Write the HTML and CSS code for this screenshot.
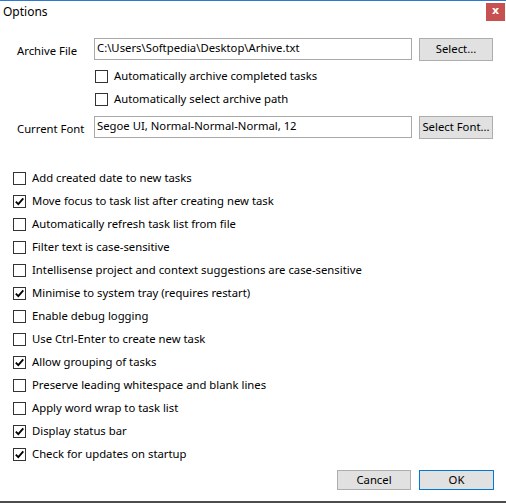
FILE: index.html
```html
<!DOCTYPE html>
<html>
<head>
<meta charset="utf-8">
<link rel="stylesheet" href="styles.css">
</head>
<body>
<div class="window">
  <div class="titlebar">
    <span class="title">Options</span>
    <span class="close">x</span>
  </div>
  <div class="top">
    <div class="row">
      <span class="label">Archive File</span>
      <div class="textbox">C:\Users\Softpedia\Desktop\Arhive.txt</div>
      <div class="btn">Select...</div>
    </div>
    <div class="subchecks">
      <label class="check"><span class="box"></span><span class="txt">Automatically archive completed tasks</span></label>
      <label class="check"><span class="box"></span><span class="txt">Automatically select archive path</span></label>
    </div>
    <div class="row font-row">
      <span class="label">Current Font</span>
      <div class="textbox">Segoe UI, Normal-Normal-Normal, 12</div>
      <div class="btn">Select Font...</div>
    </div>
  </div>
  <div class="list">
    <label class="check"><span class="box"></span><span class="txt">Add created date to new tasks</span></label>
    <label class="check"><span class="box on"><svg viewBox="0 0 11 11" width="11" height="11"><path d="M1.8 5.6 L4.3 8.2 L9.3 2.3" fill="none" stroke="#000" stroke-width="1.8"/></svg></span><span class="txt">Move focus to task list after creating new task</span></label>
    <label class="check"><span class="box"></span><span class="txt">Automatically refresh task list from file</span></label>
    <label class="check"><span class="box"></span><span class="txt">Filter text is case-sensitive</span></label>
    <label class="check"><span class="box"></span><span class="txt">Intellisense project and context suggestions are case-sensitive</span></label>
    <label class="check"><span class="box on"><svg viewBox="0 0 11 11" width="11" height="11"><path d="M1.8 5.6 L4.3 8.2 L9.3 2.3" fill="none" stroke="#000" stroke-width="1.8"/></svg></span><span class="txt">Minimise to system tray (requires restart)</span></label>
    <label class="check"><span class="box"></span><span class="txt">Enable debug logging</span></label>
    <label class="check"><span class="box"></span><span class="txt">Use Ctrl-Enter to create new task</span></label>
    <label class="check"><span class="box on"><svg viewBox="0 0 11 11" width="11" height="11"><path d="M1.8 5.6 L4.3 8.2 L9.3 2.3" fill="none" stroke="#000" stroke-width="1.8"/></svg></span><span class="txt">Allow grouping of tasks</span></label>
    <label class="check"><span class="box"></span><span class="txt">Preserve leading whitespace and blank lines</span></label>
    <label class="check"><span class="box"></span><span class="txt">Apply word wrap to task list</span></label>
    <label class="check"><span class="box on"><svg viewBox="0 0 11 11" width="11" height="11"><path d="M1.8 5.6 L4.3 8.2 L9.3 2.3" fill="none" stroke="#000" stroke-width="1.8"/></svg></span><span class="txt">Display status bar</span></label>
    <label class="check"><span class="box on"><svg viewBox="0 0 11 11" width="11" height="11"><path d="M1.8 5.6 L4.3 8.2 L9.3 2.3" fill="none" stroke="#000" stroke-width="1.8"/></svg></span><span class="txt">Check for updates on startup</span></label>
  </div>
  <div class="buttons">
    <div class="btn cancel">Cancel</div>
    <div class="btn ok">OK</div>
  </div>
</div>
</body>
</html>
```
FILE: styles.css
```css
html, body {
  margin: 0;
  padding: 0;
  background: #fff;
}
body {
  font-family: "Noto Sans", "Open Sans", sans-serif;
  font-size: 11.3px;
  color: #000;
}
.window {
  position: relative;
  width: 506px;
  height: 503px;
  box-sizing: border-box;
  border-top: 1px solid #2b79d0;
  border-bottom: 2px solid #4d4d4d;
  background: #fff;
  display: flex;
  flex-direction: column;
  overflow: hidden;
}
.titlebar {
  height: 29px;
  display: flex;
  justify-content: space-between;
  align-items: flex-start;
}
.title {
  margin-left: 3px;
  margin-top: 3px;
  font-size: 12px;
  line-height: 16px;
}
.close {
  margin-top: 2px;
  margin-right: 1px;
  width: 19px;
  height: 18px;
  background: #c75050;
  color: #fff;
  font-weight: bold;
  font-size: 11px;
  line-height: 16px;
  text-align: center;
  font-family: "DejaVu Sans", sans-serif;
}
.top {
  margin-top: 8px;
  padding-left: 17px;
}
.row {
  display: grid;
  grid-template-columns: 70px 318px 74px;
  column-gap: 7px;
  height: 23px;
  align-items: start;
}
.font-row {
  margin-top: 5px;
}
.label {
  line-height: 23px;
  padding-top: 1px;
}
.textbox {
  box-sizing: border-box;
  height: 22px;
  border: 1px solid #a9a9a9;
  padding-left: 2px;
  line-height: 18px;
  white-space: nowrap;
  overflow: hidden;
}
.btn {
  box-sizing: border-box;
  height: 23px;
  background: #e1e1e1;
  border: 1px solid #adadad;
  text-align: center;
  line-height: 20px;
  white-space: nowrap;
}
.subchecks {
  margin-top: 4px;
  padding-left: 78px;
}
.check {
  display: flex;
  align-items: center;
  height: 23px;
  gap: 6px;
  white-space: nowrap;
}
.txt {
  position: relative;
  top: -1px;
}
.box {
  box-sizing: border-box;
  width: 13px;
  height: 13px;
  border: 1px solid #333;
  background: #fff;
  flex: none;
  display: flex;
  align-items: center;
  justify-content: center;
}
.list {
  margin-top: 28px;
  padding-left: 13px;
}
.buttons {
  margin-top: 4px;
  display: flex;
  justify-content: flex-end;
  gap: 8px;
  padding-right: 12px;
}
.buttons .btn {
  height: 20px;
  line-height: 17px;
}
.cancel {
  width: 74px;
}
.ok {
  width: 75px;
  border-color: #0078d7;
}
```
